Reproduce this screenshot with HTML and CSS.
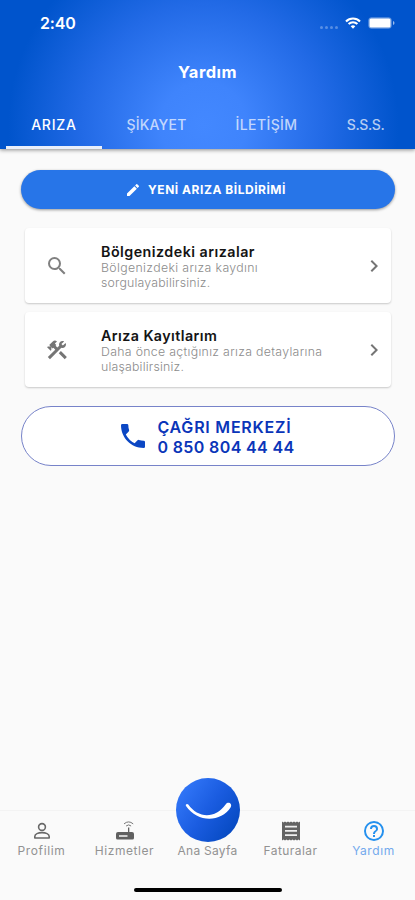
FILE: index.html
```html
<!DOCTYPE html>
<html lang="tr">
<head>
<meta charset="utf-8">
<meta name="viewport" content="width=device-width, initial-scale=1">
<title>Yardım</title>
<link rel="stylesheet" href="styles.css">
</head>
<body>
<div class="app">
  <header class="header">
    <div class="status">
      <span class="time">2:40</span>
      <span class="status-icons">
        <span class="signal"><i></i><i></i><i></i><i></i></span>
        <svg class="wifi" width="16" height="12" viewBox="0 0 16 12" fill="none" stroke="#fff" stroke-width="2.1"><path d="M1 4.4a10 10 0 0 1 14 0M3.6 7.1a6.2 6.2 0 0 1 8.8 0"/><path d="M8 11.8L5.7 9.3a3.3 3.3 0 0 1 4.6 0z" fill="#fff" stroke="none"/></svg>
        <svg width="27" height="12" viewBox="0 0 27 12"><rect x=".5" y=".5" width="23" height="11" rx="3" fill="#fff" fill-opacity=".3" stroke="#fff" stroke-opacity=".15"/><rect x="1.5" y="1.5" width="21" height="9" rx="1.5" fill="#fff"/><path d="M25 4q1.5.6 1.5 2T25 8z" fill="#fff" fill-opacity=".6"/></svg>
      </span>
    </div>
    <h1 class="title">Yardım</h1>
    <nav class="tabs">
      <a class="tab active"><span class="t1">ARIZA</span></a>
      <a class="tab"><span class="t2">ŞİKAYET</span></a>
      <a class="tab"><span class="t3">İLETİŞİM</span></a>
      <a class="tab"><span class="t4">S.S.S.</span></a>
    </nav>
  </header>
  <main class="content">
    <button class="new-report">
      <svg width="16" height="16" viewBox="0 0 24 24" fill="#fff"><path d="M3 17.25V21h3.75L17.81 9.94l-3.75-3.75L3 17.25zM20.71 7.04a1 1 0 0 0 0-1.41l-2.34-2.34a1 1 0 0 0-1.41 0l-1.83 1.83 3.75 3.75 1.83-1.83z"/></svg>
      <span>YENİ ARIZA BİLDİRİMİ</span>
    </button>
    <section class="card">
      <svg class="card-icon" width="24" height="24" viewBox="0 0 24 24" fill="#808080"><path d="M15.5 14h-.79l-.28-.27A6.47 6.47 0 0 0 16 9.5 6.5 6.5 0 1 0 9.5 16c1.61 0 3.09-.59 4.23-1.57l.27.28v.79l5 4.99L20.49 19l-4.99-5zm-6 0C7.01 14 5 11.99 5 9.5S7.01 5 9.5 5 14 7.01 14 9.5 11.99 14 9.5 14z"/></svg>
      <div class="card-text">
        <h2 class="h-a">Bölgenizdeki arızalar</h2>
        <p><span class="d1">Bölgenizdeki arıza kaydını</span><br><span class="d2">sorgulayabilirsiniz.</span></p>
      </div>
      <svg class="chevron" width="24" height="24" viewBox="0 0 24 24" fill="#757575"><path d="M10 6L8.59 7.41 13.17 12l-4.58 4.59L10 18l6-6z"/></svg>
    </section>
    <section class="card">
      <svg class="card-icon" width="24" height="24" viewBox="0 0 24 24" fill="#757575"><path d="M13.78 15.17l2.12-2.12 5.98 5.98-2.12 2.12zM17.5 10c1.93 0 3.5-1.57 3.5-3.5 0-.58-.16-1.12-.41-1.6l-2.7 2.7-1.49-1.49 2.7-2.7c-.48-.25-1.02-.41-1.6-.41C15.57 3 14 4.57 14 6.5c0 .41.08.8.21 1.16l-1.85 1.85-1.78-1.78.71-.71-1.41-1.41L12 3.49a3 3 0 0 0-4.24 0L4.22 7.03l1.41 1.41H2.81l-.71.71 3.54 3.54.71-.71V9.15l1.41 1.41.71-.71 1.78 1.78-7.41 7.41 2.12 2.12L16.34 9.79c.36.13.75.21 1.16.21z"/></svg>
      <div class="card-text">
        <h2 class="h-b">Arıza Kayıtlarım</h2>
        <p><span class="d3">Daha önce açtığınız arıza detaylarına</span><br><span class="d4">ulaşabilirsiniz.</span></p>
      </div>
      <svg class="chevron" width="24" height="24" viewBox="0 0 24 24" fill="#757575"><path d="M10 6L8.59 7.41 13.17 12l-4.58 4.59L10 18l6-6z"/></svg>
    </section>
    <a class="call">
      <svg width="32" height="32" viewBox="0 0 24 24" fill="#0b47c4"><path d="M6.62 10.79a15.15 15.15 0 0 0 6.59 6.59l2.2-2.2a1 1 0 0 1 1.02-.24c1.12.37 2.33.57 3.57.57a1 1 0 0 1 1 1V20a1 1 0 0 1-1 1C10.61 21 3 13.39 3 4a1 1 0 0 1 1-1h3.5a1 1 0 0 1 1 1c0 1.25.2 2.45.57 3.57a1 1 0 0 1-.25 1.02l-2.2 2.2z"/></svg>
      <span class="call-text"><span class="c1">ÇAĞRI MERKEZİ</span><span class="c2">0 850 804 44 44</span></span>
    </a>
  </main>
  <footer class="bottom">
    <nav class="bar">
      <a class="item">
        <svg width="20" height="20" viewBox="0 0 20 20" fill="none" stroke="#686868" stroke-width="1.6"><circle cx="10" cy="6" r="3.4"/><path d="M2.8 17v-1.6c0-2.3 3.4-3.8 7.2-3.8s7.2 1.5 7.2 3.8V17z" stroke-linejoin="round"/></svg>
        <span class="n1">Profilim</span>
      </a>
      <a class="item">
        <svg width="20" height="20" viewBox="0 0 20 20"><path d="M1 13q0-2 2-2h10V6.5h1.3V11H17q2 0 2 2v4q0 1.6-1.6 1.6H2.6Q1 18.6 1 17z" fill="#606060"/><path d="M4 15h8.500" stroke="#ddd" stroke-width="1.8"/><path d="M9 2.900q4.600-4 9.200 0M11.100 5q2.500-2.200 5 0" fill="none" stroke="#777"/></svg>
        <span class="n2">Hizmetler</span>
      </a>
      <a class="item home">
        <span class="logo"><svg width="64" height="64" viewBox="0 0 64 64" fill="#fff"><path d="M10 28c-.9-1.500 1.100-2.800 2.300-1.400C22 40.500 39.500 41 49.800 26.200c2.600-3.200 6.800-.2 4.900 3C45 44.500 21.500 45 10 28z"/></svg></span>
        <span class="n3">Ana Sayfa</span>
      </a>
      <a class="item">
        <svg width="20" height="20" viewBox="0 0 20 20"><path d="M1 .5l1.5 1L4 .5l1.5 1L7 .5l1.5 1 1.5-1 1.500 1 1.500-1 1.500 1 1.500-1 1.500 1 1.500-1v19l-1.500-1-1.500 1-1.500-1-1.500 1-1.500-1-1.500 1-1.500-1-1.500 1-1.500-1-1.500 1-1.500-1-1.500 1z" fill="#626262"/><path d="M4 5.6h12M4 9.9h12M4 14.2h12" stroke="#eee" stroke-width="1.7"/></svg>
        <span class="n4">Faturalar</span>
      </a>
      <a class="item current">
        <svg width="24" height="24" viewBox="0 0 24 24" fill="#2490ee"><path d="M11 18h2v-2h-2v2zm1-16a10 10 0 1 0 0 20 10 10 0 0 0 0-20zm0 18c-4.41 0-8-3.59-8-8s3.59-8 8-8 8 3.59 8 8-3.59 8-8 8zm0-14a4 4 0 0 0-4 4h2c0-1.1.9-2 2-2s2 .9 2 2c0 2-3 1.75-3 5h2c0-2.25 3-2.5 3-5a4 4 0 0 0-4-4z"/></svg>
        <span class="n5">Yardım</span>
      </a>
    </nav>
    <div class="home-indicator"></div>
  </footer>
</div>
</body>
</html>
```
FILE: styles.css
```css
* { box-sizing: border-box; }
body { margin: 0; font-family: Inter, "Liberation Sans", sans-serif; background: #fafafa; }
h1, h2, p { margin: 0; }
span { white-space: nowrap; }
.app { width: 415px; height: 900px; display: flex; flex-direction: column; overflow: hidden; }

.header {
  height: 149px; flex: none; display: flex; flex-direction: column; color: #fff;
  background: radial-gradient(circle 195px at 49% 84%, #4388ff 0%, #3f84fc 22%, #226ae6 62%, #0054cc 100%);
  box-shadow: 0 1px 4px rgba(0, 0, 0, .45);
}
.status { height: 46px; display: flex; justify-content: space-between; align-items: center; padding: 0 20px 0 40px; }
.time { font-size: 16px; font-weight: 600; letter-spacing: -.2px; }
.status-icons { display: flex; align-items: center; }
.signal { display: flex; gap: 2px; margin: 8px 7px 0 0; }
.signal i { width: 3px; height: 3px; border-radius: 50%; background: rgba(255, 255, 255, .3); }
.wifi { margin-right: 7px; }
.title { height: 53px; line-height: 53px; text-align: center; font-size: 16.5px; font-weight: 700; letter-spacing: .45px; }
.tabs { height: 50px; display: grid; grid-template-columns: 96px 109px 111px 87px; padding: 0 6px; }
.tab { display: flex; align-items: center; justify-content: center; font-size: 14px; font-weight: 500; color: rgba(255, 255, 255, .7); border-bottom: 3px solid transparent; padding-top: 4px; }
.tab.active { color: #fff; border-color: #e9effa; }
.t1 { letter-spacing: .8px; }
.t2 { letter-spacing: .2px; }
.t3 { letter-spacing: .4px; }
.t4 { letter-spacing: -.4px; }

.content { flex: 1; padding: 21px 20px 0 21px; display: flex; flex-direction: column; }
.new-report {
  height: 39px; border: 0; border-radius: 20px; background: #2775e8; color: #fff; font: 700 12px Inter, sans-serif;
  letter-spacing: .53px; display: flex; align-items: center; justify-content: center; gap: 7px; padding: 0 5px 0 0;
  box-shadow: 0 1px 3px rgba(0, 0, 0, .4);
}
.card {
  height: 75px; margin: 19px 4px 0; background: #fff; border-radius: 4px; display: flex; align-items: center;
  box-shadow: 0 1px 2px rgba(0, 0, 0, .2); padding: 1px 5px 0 20px;
}
.card + .card { margin-top: 9px; }
.card-text { flex: 1; margin: 0 0 0 32px; }
.card h2 { font-size: 14.3px; line-height: 17px; font-weight: 600; color: #141414; white-space: nowrap; }
.card p { font-size: 12.3px; line-height: 15px; font-weight: 300; color: #8c8c8c; }
.card .h-a { letter-spacing: .47px; }
.card .h-b { letter-spacing: .42px; }
.d1 { letter-spacing: .36px; }
.d2 { letter-spacing: .2px; }
.d3 { letter-spacing: .32px; }
.d4 { letter-spacing: .2px; }
.call {
  height: 60px; margin-top: 19px; border: 1px solid #7783c9; border-radius: 30px; background: #fff; color: #0a35b9;
  display: flex; align-items: center; justify-content: center; gap: 8px; padding-right: 4px;
}
.call-text { display: flex; flex-direction: column; font-size: 16px; font-weight: 600; line-height: 20px; padding-top: 1px; }
.c1 { letter-spacing: .78px; }
.c2 { letter-spacing: .37px; }

.bottom { height: 90px; border-top: 1px solid #f3f3f3; }
.bar { height: 48px; display: grid; grid-template-columns: repeat(5, 1fr); }
.item { display: flex; flex-direction: column; align-items: center; justify-content: flex-end; color: #929292; font-size: 12px; line-height: 16px; font-weight: 400; }
.item svg { display: block; margin-bottom: 2px; }
.current { color: #72a9ed; }
.item.current svg { margin-bottom: 0; }
.item .logo { width: 64px; height: 64px; flex: none; margin-bottom: 1px; border-radius: 50%; background: linear-gradient(125deg, #397eff, #1a5ce0 50%, #0044b8); }
.item.home { margin-top: -33px; }
.n1 { letter-spacing: .65px; }
.n2 { letter-spacing: .55px; }
.n3 { letter-spacing: .25px; }
.n4 { letter-spacing: .45px; }
.n5 { letter-spacing: .6px; }
.home-indicator { width: 148px; height: 4px; border-radius: 2px; background: #000; margin: 29px 0 0 134px; }
```
